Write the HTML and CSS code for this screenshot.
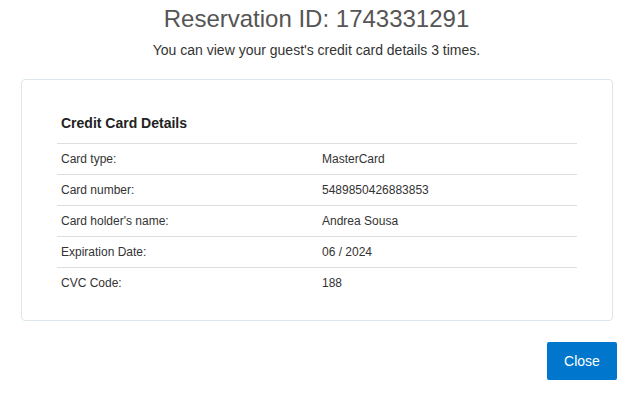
FILE: index.html
```html
<!DOCTYPE html>
<html>
<head>
<meta charset="utf-8">
<link rel="stylesheet" href="styles.css">
</head>
<body>
<div class="modal">
  <h1 class="title">Reservation ID: 1743331291</h1>
  <p class="subtitle">You can view your guest's credit card details 3 times.</p>
  <div class="card">
    <h2 class="card-heading">Credit Card Details</h2>
    <div class="details">
      <div class="row"><div class="cell">Card type:</div><div class="cell">MasterCard</div></div>
      <div class="row"><div class="cell">Card number:</div><div class="cell">5489850426883853</div></div>
      <div class="row"><div class="cell">Card holder's name:</div><div class="cell">Andrea Sousa</div></div>
      <div class="row"><div class="cell">Expiration Date:</div><div class="cell">06 / 2024</div></div>
      <div class="row"><div class="cell">CVC Code:</div><div class="cell">188</div></div>
    </div>
  </div>
  <div class="actions">
    <button class="btn-close">Close</button>
  </div>
</div>
</body>
</html>
```
FILE: styles.css
```css
html, body {
  margin: 0;
  padding: 0;
  background: #fff;
}
body {
  font-family: "Liberation Sans", Arial, sans-serif;
  color: #333;
}
.modal {
  display: flex;
  flex-direction: column;
}
.title {
  margin: 6px 0 0;
  padding-right: 4px;
  font-size: 24px;
  line-height: 26px;
  font-weight: normal;
  color: #555;
  text-align: center;
}
.subtitle {
  margin: 8px 0 0;
  padding-right: 4px;
  font-size: 14px;
  line-height: 20px;
  text-align: center;
  color: #333;
}
.card {
  margin: 19px 24px 0 21px;
  border: 1px solid #dce6ed;
  border-radius: 4px;
  padding: 33px 35px 22px 35px;
}
.card-heading {
  margin: 0;
  font-size: 14px;
  line-height: 20px;
  font-weight: bold;
  color: #222;
  padding-left: 4px;
}
.details {
  margin-top: 10px;
  display: flex;
  flex-direction: column;
}
.row {
  display: grid;
  grid-template-columns: 1fr 1fr;
  border-top: 1px solid #dcdfe2;
  height: 30px;
  align-items: center;
  font-size: 12px;
}
.cell {
  padding: 0 4px;
}
.cell + .cell {
  padding-left: 5px;
}
.actions {
  display: flex;
  justify-content: flex-end;
  padding: 21px 20px 0 0;
}
.btn-close {
  width: 70px;
  height: 38px;
  border: none;
  border-radius: 2px;
  background: #0077cc;
  color: #fff;
  font-family: "Liberation Sans", Arial, sans-serif;
  font-size: 14px;
  padding: 0;
}
```
